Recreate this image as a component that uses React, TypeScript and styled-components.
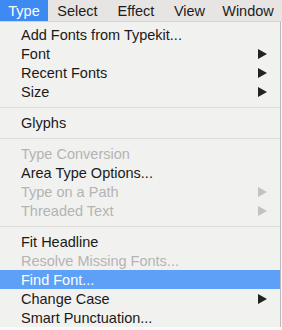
import React from "react";
import styled, { createGlobalStyle } from "styled-components";

const GlobalStyle = createGlobalStyle`
  html, body {
    margin: 0;
    padding: 0;
    background: #fafafa;
  }
  body {
    font-family: "Liberation Sans", Arial, sans-serif;
  }
`;

const Screen = styled.div`
  width: 282px;
  height: 330px;
  overflow: hidden;
  background: #fafafa;
`;

const MenuBar = styled.div`
  display: flex;
  height: 22px;
  background: #e7e5e3;
  border-bottom: 1px solid #d6d4d2;
  box-sizing: border-box;
`;

const MenuTitle = styled.div<{ active?: boolean; w: number }>`
  display: flex;
  align-items: center;
  justify-content: center;
  flex: none;
  width: ${(p) => p.w}px;
  font-size: 14.5px;
  color: ${(p) => (p.active ? "#fff" : "#1c1c1c")};
  background: ${(p) => (p.active ? "#3d8af2" : "transparent")};
`;

const Dropdown = styled.div`
  width: 281px;
  box-sizing: border-box;
  padding-top: 3px;
  background: #f1f1ef;
  border-right: 1px solid #b9b9b9;
`;

const Item = styled.div<{ disabled?: boolean; selected?: boolean }>`
  display: flex;
  align-items: center;
  justify-content: space-between;
  height: 19px;
  padding: 0 13px 0 21px;
  font-size: 14.5px;
  color: ${(p) => (p.selected ? "#fff" : p.disabled ? "#b4b4b4" : "#1a1a1a")};
  background: ${(p) => (p.selected ? "#5ca0f7" : "transparent")};
`;

const Separator = styled.div`
  height: 1px;
  margin: 6px 0 5px;
  background: #dcdcdb;
`;

const Arrow = ({ disabled }: { disabled?: boolean }) => (
  <svg width="9" height="10" viewBox="0 0 9 10">
    <path d="M0 0 L9 5 L0 10 Z" fill={disabled ? "#c2c2c2" : "#222"} />
  </svg>
);

type Entry =
  | { sep: true }
  | { label: string; disabled?: boolean; sub?: boolean; selected?: boolean };

const entries: Entry[] = [
  { label: "Add Fonts from Typekit..." },
  { label: "Font", sub: true },
  { label: "Recent Fonts", sub: true },
  { label: "Size", sub: true },
  { sep: true },
  { label: "Glyphs" },
  { sep: true },
  { label: "Type Conversion", disabled: true },
  { label: "Area Type Options..." },
  { label: "Type on a Path", disabled: true, sub: true },
  { label: "Threaded Text", disabled: true, sub: true },
  { sep: true },
  { label: "Fit Headline" },
  { label: "Resolve Missing Fonts...", disabled: true },
  { label: "Find Font...", selected: true },
  { label: "Change Case", sub: true },
  { label: "Smart Punctuation..." },
];

const titles = [
  { label: "Type", w: 48, active: true },
  { label: "Select", w: 59 },
  { label: "Effect", w: 58 },
  { label: "View", w: 49 },
  { label: "Window", w: 68 },
];

export default function App() {
  return (
    <Screen>
      <GlobalStyle />
      <MenuBar>
        {titles.map((t) => (
          <MenuTitle key={t.label} w={t.w} active={t.active}>
            {t.label}
          </MenuTitle>
        ))}
      </MenuBar>
      <Dropdown>
        {entries.map((e, i) =>
          "sep" in e ? (
            <Separator key={i} />
          ) : (
            <Item key={i} disabled={e.disabled} selected={e.selected}>
              <span>{e.label}</span>
              {e.sub && <Arrow disabled={e.disabled} />}
            </Item>
          )
        )}
      </Dropdown>
    </Screen>
  );
}
